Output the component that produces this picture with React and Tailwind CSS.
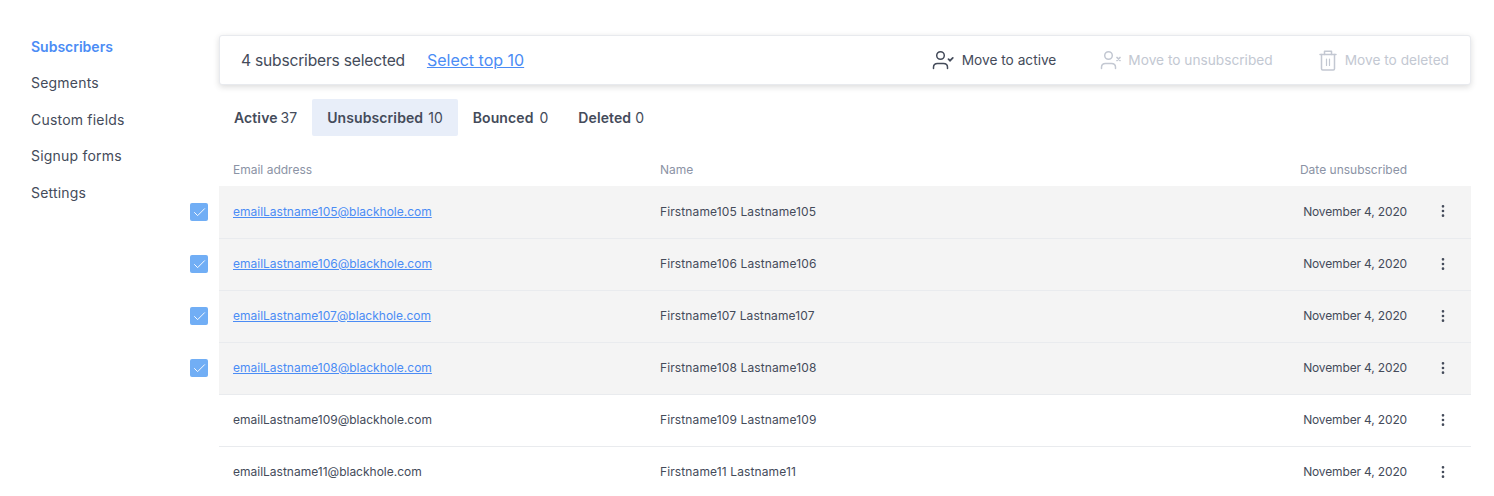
import { Check, EllipsisVertical } from "lucide-react";

const nav = ["Subscribers", "Segments", "Custom fields", "Signup forms", "Settings"];

const rows = [
  { email: "emailLastname105@blackhole.com", name: "Firstname105 Lastname105", selected: true, first: true },
  { email: "emailLastname106@blackhole.com", name: "Firstname106 Lastname106", selected: true },
  { email: "emailLastname107@blackhole.com", name: "Firstname107 Lastname107", selected: true },
  { email: "emailLastname108@blackhole.com", name: "Firstname108 Lastname108", selected: true },
  { email: "emailLastname109@blackhole.com", name: "Firstname109 Lastname109", selected: false },
  { email: "emailLastname11@blackhole.com", name: "Firstname11 Lastname11", selected: false },
];

const tabs = [
  { label: "Active", count: 37, gap: "ml-[3px]" },
  { label: "Unsubscribed", count: 10, gap: "ml-[5px]", active: true },
  { label: "Bounced", count: 0, gap: "ml-[6px]" },
  { label: "Deleted", count: 0, gap: "ml-[4px]" },
];

function UserCheckIcon() {
  return (
    <svg width="22" height="20" viewBox="0 0 22 20" fill="none" stroke="currentColor" strokeWidth="1.5" strokeLinecap="round">
      <circle cx="8.5" cy="5.5" r="3.8" />
      <path d="M1.5 18.5v-1.2c0-2.3 1.8-3.8 4-3.8h6c2.2 0 4 1.5 4 3.8v1.2" />
      <path d="M16.5 9.2l1.5 1.5 2.8-2.9" strokeWidth="1.7" />
    </svg>
  );
}

function UserXIcon() {
  return (
    <svg width="22" height="20" viewBox="0 0 22 20" fill="none" stroke="currentColor" strokeWidth="1.5" strokeLinecap="round">
      <circle cx="8.5" cy="5.5" r="3.8" />
      <path d="M1.5 18.5v-1.2c0-2.3 1.8-3.8 4-3.8h6c2.2 0 4 1.5 4 3.8v1.2" />
      <path d="M17 7.5l3 3M20 7.5l-3 3" strokeWidth="1.7" />
    </svg>
  );
}

function TrashIcon() {
  return (
    <svg width="18" height="21" viewBox="0 0 18 21" fill="none" stroke="currentColor" strokeWidth="1.5" strokeLinecap="round" strokeLinejoin="round">
      <path d="M1 4.5h16" />
      <path d="M5.5 4.5V1.2h7v3.3" />
      <path d="M2.5 4.5v14.3c0 .7.5 1.2 1.2 1.2h10.6c.7 0 1.2-.5 1.2-1.2V4.5" />
      <path d="M7.5 9v6.5M10.5 9v6.5" strokeWidth="1.2" />
    </svg>
  );
}

export default function App() {
  return (
    <div className="flex h-[496px] overflow-hidden bg-white font-['Inter',sans-serif] text-[#444b5a]">
      <div className="w-[190px] shrink-0 pl-[31px] pt-[28.5px]">
        {nav.map((item, i) => (
          <div key={item} className={`h-[36.5px] text-[14px] leading-[36.5px] ${i === 0 ? "font-semibold text-[#4b8cf5]" : "tracking-[0.2px]"}`}>
            {item}
          </div>
        ))}
      </div>

      <div className="w-[1281px] shrink-0 pt-[35px]">
        <div className="ml-[29px] flex h-[50px] items-center justify-between rounded-[3px] border border-[#e8eaee] bg-white pl-[21px] pr-[21px] shadow-[0_2px_6px_rgba(0,0,0,0.14)]">
          <div className="flex items-baseline text-[16px]">
            <span className="text-[15.6px] tracking-[-0.2px]">4 subscribers selected</span>
            <span className="ml-[22px] text-[#4b8cf5] underline">Select top 10</span>
          </div>
          <div className="flex items-center text-[13.7px]">
            <div className="flex items-center gap-[8px]">
              <UserCheckIcon />
              <span>Move to active</span>
            </div>
            <div className="ml-[44px] flex items-center gap-[6px] text-[#c3c8d2]">
              <UserXIcon />
              <span>Move to unsubscribed</span>
            </div>
            <div className="ml-[46px] flex items-center gap-[8px] text-[#c3c8d2]">
              <TrashIcon />
              <span>Move to deleted</span>
            </div>
          </div>
        </div>

        <div className="ml-[29px] mt-[14px] flex">
          {tabs.map((tab) => (
            <div key={tab.label} className={`flex h-[37px] items-center rounded-[2px] px-[15px] text-[14px] ${tab.active ? "bg-[#e8eef9]" : ""}`}>
              <span className="font-semibold tracking-[0.1px]">{tab.label}</span>
              <span className={tab.gap}>{tab.count}</span>
            </div>
          ))}
        </div>

        <div className="ml-[29px] flex h-[50px] items-end pb-[8px] text-[12px] leading-[16px] text-[#8b93a5]">
          <div className="w-[441px] pl-[14px]">Email address</div>
          <div className="flex-1">Name</div>
          <div className="mr-[64px] whitespace-nowrap">Date unsubscribed</div>
        </div>

        {rows.map((row) => (
          <div key={row.email} className="flex h-[52px] items-center">
            <div className="w-[29px] shrink-0">
              {row.selected && (
                <div className="flex h-[18px] w-[18px] items-center justify-center rounded-[2px] bg-[#71aef5]">
                  <Check size={15} strokeWidth={1.5} className="text-white" />
                </div>
              )}
            </div>
            <div className={`flex h-[52px] flex-1 items-center text-[12px] ${row.first ? "" : "border-t border-[#e9ebee] pb-[1px]"} ${row.selected ? "bg-[#f4f4f4]" : ""}`}>
              <div className={`w-[441px] pl-[14px] ${row.selected ? "text-[#4b8cf5] underline" : ""}`}>{row.email}</div>
              <div className="flex-1 tracking-[0.12px]">{row.name}</div>
              <div className="whitespace-nowrap tracking-[-0.15px]">November 4, 2020</div>
              <div className={`ml-[28px] mr-[20px] flex w-[16px] justify-center ${row.first ? "-mt-[2px]" : ""}`}>
                <EllipsisVertical size={16} strokeWidth={2} />
              </div>
            </div>
          </div>
        ))}
      </div>
    </div>
  );
}
